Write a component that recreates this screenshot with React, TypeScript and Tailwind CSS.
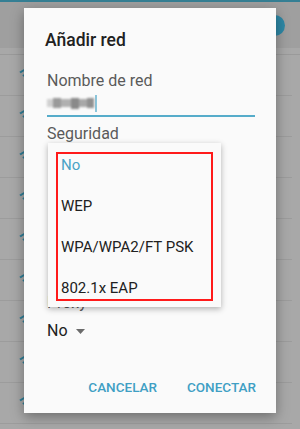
import React from 'react'

const ROWS = 9

function WifiIcon() {
  return (
    <svg width="18" height="14" viewBox="0 0 18 14" className="text-[#2f7f99]">
      <path d="M1 4.5 Q9 -2 17 4.5" stroke="currentColor" strokeWidth="2" fill="none" />
      <path d="M4 8 Q9 3.5 14 8" stroke="currentColor" strokeWidth="2" fill="none" />
      <circle cx="9" cy="11.5" r="1.8" fill="currentColor" />
    </svg>
  )
}

function Background() {
  return (
    <div className="flex flex-col">
      <div className="h-[2px] bg-[#357f94]" />
      <div className="h-[46px] bg-[#9f9f9f] flex items-center justify-end pr-[15px]">
        <div className="w-[21px] h-[21px] rounded-full bg-[#2e88a6]" />
      </div>
      <div className="h-[7px] border-b border-[#9a9a9a]" />
      {Array.from({ length: ROWS }).map((_, i) => (
        <div key={i} className="h-[41px] flex items-center border-b border-[#9c9c9c] mr-[8px] pl-[19px]">
          <WifiIcon />
        </div>
      ))}
    </div>
  )
}

const items = ['No', 'WEP', 'WPA/WPA2/FT PSK', '802.1x EAP']

export default function App() {
  return (
    <div className="relative w-[300px] h-[429px] overflow-hidden bg-[#a8a8a8] font-['Roboto',sans-serif]">
      <Background />

      {/* dialog */}
      <div className="absolute left-[24px] top-[8px] w-[252px] h-[405px] bg-[#fafafa] shadow-[0_4px_12px_rgba(0,0,0,0.35)] flex flex-col">
        <div className="pt-[21px] pl-[21px] text-[17.5px] leading-[23px] font-medium text-[#212121]">Añadir red</div>

        <div className="px-[23px] pt-[19px] flex flex-col">
          <div className="text-[16px] leading-[20px] text-[#5a5a5a]">Nombre de red</div>
          <div className="h-[22px] flex items-center gap-[1px] mt-[1px]">
            <div className="flex items-center blur-[1.2px]">
              <div className="w-[6px] h-[8px] bg-[#d0d0d0]" />
              <div className="w-[8px] h-[10px] bg-[#9a9a9a]" />
              <div className="w-[10px] h-[8px] bg-[#b0b0b0]" />
              <div className="w-[8px] h-[11px] bg-[#8a8a8a]" />
              <div className="w-[8px] h-[8px] bg-[#a8a8a8]" />
              <div className="w-[7px] h-[10px] bg-[#909090]" />
            </div>
            <div className="w-[2px] h-[17px] bg-[#8cc5da]" />
          </div>
          <div className="h-[2px] bg-[#56acca] mt-[1px] mr-[-2px]" />

          <div className="text-[16px] leading-[20px] text-[#5a5a5a] mt-[7px]">Seguridad</div>
          <div className="h-[147px]" />
          <div className="text-[16px] leading-[20px] text-[#5a5a5a] mt-[2px]">Proxy</div>
          <div className="flex items-center gap-[8px] mt-[8px] text-[16px] leading-[20px] text-[#212121]">
            <span>No</span>
            <svg width="9" height="5" viewBox="0 0 9 5">
              <path d="M0 0 H9 L4.5 5 Z" fill="#6b6b6b" />
            </svg>
          </div>
        </div>

        <div className="mt-auto mb-[16px] flex justify-end gap-[30px] pr-[20px] text-[13.5px] leading-[20px] font-medium text-[#3f9fc4]">
          <span>CANCELAR</span>
          <span>CONECTAR</span>
        </div>
      </div>

      {/* dropdown popup */}
      <div className="absolute left-[48px] top-[143px] w-[173px] h-[164px] bg-[#fafafa] shadow-[0_2px_6px_rgba(0,0,0,0.3)] pt-[2px]">
        {items.map((t, i) => (
          <div
            key={t}
            className={`h-[41px] flex items-center pl-[13px] text-[15px] ${i === 0 ? 'text-[#4aa3c6]' : 'text-[#212121]'}`}
          >
            {t}
          </div>
        ))}
        <div className="absolute left-[8px] top-[9px] w-[157px] h-[149px] border-2 border-[#ff1a1a]" />
      </div>
    </div>
  )
}
